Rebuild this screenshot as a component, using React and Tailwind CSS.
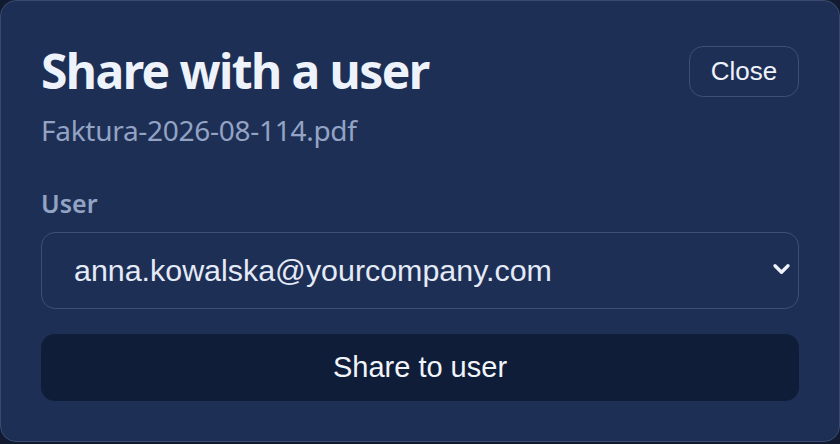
import { useState } from "react"

const USERS = [
  "anna.kowalska@yourcompany.com",
  "piotr.nowak@yourcompany.com",
  "marta.wisniewska@yourcompany.com",
]

function Chevron() {
  return (
    <svg viewBox="0 0 20 14" className="w-[19px] h-[13px]" fill="none">
      <polyline
        points="3,3 10,10 17,3"
        stroke="#eef3fb"
        strokeWidth="3.6"
        strokeLinecap="round"
        strokeLinejoin="round"
      />
    </svg>
  )
}

export default function App() {
  const [user, setUser] = useState(USERS[0])

  return (
    <div className="w-[840px] h-[444px] bg-[#111a2e]">
      <div className="flex flex-col rounded-2xl border border-[#3a4a6e] bg-[#1e2f56] px-10 pt-10 pb-10">

        {/* header */}
        <div className="flex items-center justify-between">
          <h1 className="text-[48px] leading-[60px] font-bold text-[#eef3fb] font-['Segoe_UI','Noto_Sans',sans-serif] tracking-[-0.033em]">
            Share with a user
          </h1>
          <button className="h-[51px] w-[110px] rounded-[14px] border border-[#3f4f72] text-[26px] text-[#eef3fb] font-['Liberation_Sans',Arial,sans-serif]">
            Close
          </button>
        </div>

        <p className="mt-[9px] text-[28px] leading-[40px] text-[#93a3c4] font-['Segoe_UI','Noto_Sans',sans-serif] tracking-[-0.01em]">
          Faktura-2026-08-114.pdf
        </p>

        {/* field */}
        <label className="mt-[36px] text-[25px] leading-[34px] font-semibold text-[#93a3c4] font-['Segoe_UI','Noto_Sans',sans-serif]">
          User
        </label>
        <div className="relative mt-[12px]">
          <select
            value={user}
            onChange={(e) => setUser(e.target.value)}
            className="w-full h-[77px] appearance-none rounded-[14px] border border-[#3f4f72] bg-transparent pl-[32px] pr-12 text-[30.4px] text-[#e4ebf7] font-['Liberation_Sans',Arial,sans-serif] outline-none"
          >
            {USERS.map((u) => (
              <option key={u} value={u} className="bg-[#1e2f56]">{u}</option>
            ))}
          </select>
          <span className="pointer-events-none absolute right-[8px] top-[31px]">
            <Chevron />
          </span>
        </div>

        <button className="mt-[25px] h-[67px] w-full rounded-[14px] bg-[#0f1d39] text-[29px] text-[#f1f5fb] font-['Liberation_Sans',Arial,sans-serif]">
          Share to user
        </button>

      </div>
    </div>
  )
}
